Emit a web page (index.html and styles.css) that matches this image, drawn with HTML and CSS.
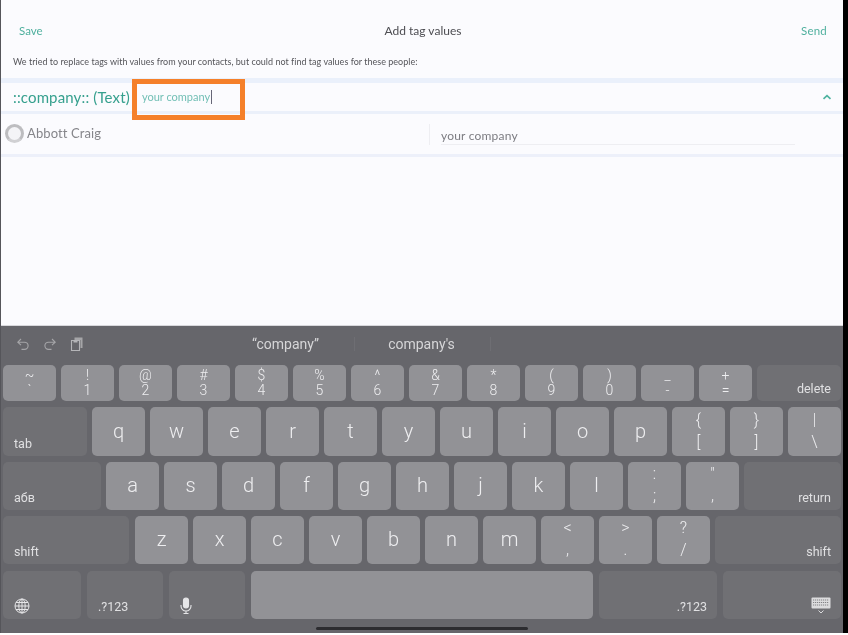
FILE: index.html
```html
<!DOCTYPE html>
<html lang="en">
<head>
<meta charset="utf-8">
<title>Add tag values</title>
<link rel="stylesheet" href="styles.css">
</head>
<body>
<div class="frame">
  <div class="screen">
    <main class="panel">
      <header class="topbar">
        <span class="link">Save</span>
        <span class="title">Add tag values</span>
        <span class="link link-end">Send</span>
      </header>
      <p class="message">We tried to replace tags with values from your contacts, but could not find tag values for these people:</p>
      <section class="tag-row">
        <span class="tag-name">::company:: (Text)</span>
        <span class="tag-input">your company<i class="caret"></i></span>
        <svg class="chevron" width="10" height="6" viewBox="0 0 10 6"><path d="M1.5 4.800 5 1.600l3.500 3.200" fill="none" stroke="#4fb3a0" stroke-width="1.700"/></svg>
        <div class="highlight"></div>
      </section>
      <section class="person-row">
        <span class="avatar"></span>
        <span class="person-name">Abbott Craig</span>
        <span class="person-field"><span class="person-value">your company</span></span>
      </section>
    </main>
    <section class="keyboard">
      <div class="suggest">
        <div class="tools">
          <svg width="14" height="14" viewBox="0 0 14 14"><path d="M5 2 1.800 5.200 5 8.200M2 5.200h6.500a3.600 3.600 0 0 1 0 7.200H5.500" fill="none" stroke="#a5a5a8" stroke-width="1.100"/></svg>
          <svg width="14" height="14" viewBox="0 0 14 14"><path d="M9 2l3.200 3.200L9 8.200M12 5.200H5.500a3.600 3.600 0 0 0 0 7.200h3" fill="none" stroke="#a5a5a8" stroke-width="1.100"/></svg>
          <svg width="14" height="16" viewBox="0 0 14 16"><path d="M4.500 1.500h8v10.500h-2V4H4.500z" fill="#a5a5a8"/><path d="M1.500 4.500h8v10h-8z" fill="#66666b" stroke="#b5b5b8" stroke-width="1.100"/><path d="M3.500 4.500h4v2h-4z" fill="#b5b5b8"/></svg>
        </div>
        <span class="cand">“company”</span>
        <span class="cand">company's</span>
      </div>
      <div class="row row-1">
        <span class="key two small"><b>~</b><b>`</b></span>
        <span class="key two small"><b>!</b><b>1</b></span>
        <span class="key two small"><b>@</b><b>2</b></span>
        <span class="key two small"><b>#</b><b>3</b></span>
        <span class="key two small"><b>$</b><b>4</b></span>
        <span class="key two small"><b>%</b><b>5</b></span>
        <span class="key two small"><b>^</b><b>6</b></span>
        <span class="key two small"><b>&amp;</b><b>7</b></span>
        <span class="key two small"><b>*</b><b>8</b></span>
        <span class="key two small"><b>(</b><b>9</b></span>
        <span class="key two small"><b>)</b><b>0</b></span>
        <span class="key two small"><b>_</b><b>-</b></span>
        <span class="key two small"><b>+</b><b>=</b></span>
        <span class="fn end w-delete">delete</span>
      </div>
      <div class="row row-2">
        <span class="fn w-tab">tab</span>
        <span class="key">q</span><span class="key">w</span><span class="key">e</span><span class="key">r</span><span class="key">t</span><span class="key">y</span><span class="key">u</span><span class="key">i</span><span class="key">o</span><span class="key">p</span>
        <span class="key two"><b>{</b><b>[</b></span>
        <span class="key two"><b>}</b><b>]</b></span>
        <span class="key two"><b>|</b><b>\</b></span>
      </div>
      <div class="row row-3">
        <span class="fn w-abv">абв</span>
        <span class="key">a</span><span class="key">s</span><span class="key">d</span><span class="key">f</span><span class="key">g</span><span class="key">h</span><span class="key">j</span><span class="key">k</span><span class="key">l</span>
        <span class="key two"><b>:</b><b>;</b></span>
        <span class="key two"><b>"</b><b>,</b></span>
        <span class="fn end grow">return</span>
      </div>
      <div class="row row-4">
        <span class="fn w-shift">shift</span>
        <span class="key">z</span><span class="key">x</span><span class="key">c</span><span class="key">v</span><span class="key">b</span><span class="key">n</span><span class="key">m</span>
        <span class="key two"><b>&lt;</b><b>,</b></span>
        <span class="key two"><b>&gt;</b><b>.</b></span>
        <span class="key two"><b>?</b><b>/</b></span>
        <span class="fn end grow">shift</span>
      </div>
      <div class="row row-5">
        <span class="fn w-globe icon-key">
          <svg width="16" height="16" viewBox="0 0 16 16" fill="none" stroke="#e6e6e8" stroke-width="1"><circle cx="8" cy="8" r="7"/><ellipse cx="8" cy="8" rx="3.200" ry="7"/><path d="M8 1v14M1 8h14M2 4.500h12M2 11.500h12"/></svg>
        </span>
        <span class="fn w-num">.?123</span>
        <span class="fn w-num icon-key">
          <svg width="12" height="17" viewBox="0 0 12 17" fill="none" stroke="#e6e6e8" stroke-width="1.100"><rect x="3.500" y="1" width="5" height="10" rx="2.500" fill="#e6e6e8"/><path d="M1 8v1a5 5 0 0 0 10 0V8M6 14v2.500M3.500 16.500h5"/></svg>
        </span>
        <span class="key w-space"></span>
        <span class="fn end w-wide">.?123</span>
        <span class="fn end w-wide icon-key">
          <svg width="20" height="17" viewBox="0 0 20 17"><rect x=".5" y=".5" width="19" height="11" rx="1" fill="#dcdcde"/><path d="M2 3h16M2 5.500h16M2 8h16" stroke="#77777a" stroke-width=".9" stroke-dasharray="1.200 .8"/><path d="M7.500 13.500 10 16l2.500-2.500" fill="none" stroke="#dcdcde"/></svg>
        </span>
      </div>
      <div class="home"></div>
    </section>
  </div>
</div>
</body>
</html>
```

FILE: styles.css
```css
* { box-sizing: border-box; }
html, body { margin: 0; height: 100%; background: #fff; overflow: hidden; }
.frame {
  display: flex;
  width: 848px;
  height: 633px;
  background: #000;
  border-left: 1px solid #55555a;
  padding-right: 5px;
  filter: blur(.4px);
}
.screen { flex: 1; display: flex; flex-direction: column; min-width: 0; }

.panel {
  height: 326px;
  background: #fbfbfe;
  font-family: Lato, "Open Sans", sans-serif;
  border-bottom: 1px solid #d8d8dc;
}
.topbar {
  display: grid;
  grid-template-columns: 1fr auto 1fr;
  align-items: center;
  height: 62px;
  padding: 0 16px 1px 18px;
}
.link { color: #4fb09e; font-size: 11.500px; }
.link-end { text-align: right; letter-spacing: .2px; }
.title { color: #4d4d52; font-size: 12px; }
.message {
  margin: -7px 0 0;
  padding-left: 12px;
  height: 23px;
  line-height: 13px;
  font-size: 9px;
  color: #55555a;
  letter-spacing: .02px;
}
.tag-row {
  position: relative;
  display: flex;
  align-items: center;
  height: 36px;
  padding: 0 11px 0 12px;
  border-top: 5px solid #eaf0fb;
  border-bottom: 3px solid #ebf0fa;
}
.tag-name { color: #36a08e; font-size: 15px; letter-spacing: .15px; margin-top: -1px; }
.tag-input { color: #72bfb5; font-size: 11px; margin-left: 12px; }
.caret { display: inline-block; width: 1px; height: 14px; background: #667; vertical-align: -3px; margin-left: 1px; }
.chevron { margin-left: auto; }
.highlight {
  position: absolute;
  left: 131px;
  top: -4px;
  width: 113px;
  height: 41px;
  border: 5px solid #f5802a;
}
.person-row {
  display: flex;
  align-items: center;
  height: 43px;
  padding: 0 48px 0 4px;
  border-bottom: 3px solid #edf0fa;
}
.avatar {
  width: 19px;
  height: 19px;
  border-radius: 50%;
  border: 3px solid #bdbdc0;
  border-bottom-color: #d0d0d3;
  background: #f4f4f7;
  margin-right: 3px;
  margin-top: -2px;
}
.person-name { color: #85858a; font-size: 13px; letter-spacing: .1px; width: 402px; margin-top: -3px; }
.person-field {
  flex: 1;
  display: flex;
  align-items: flex-end;
  height: 21px;
  margin-top: 1px;
  padding-left: 11px;
  border-left: 1px solid #eeeef2;
}
.person-value {
  flex: 1;
  color: #7c7c82;
  font-size: 12px;
  letter-spacing: .2px;
  line-height: 17px;
  border-bottom: 1px solid #eeeef2;
}

.keyboard {
  flex: 1;
  display: flex;
  flex-direction: column;
  background: #66666b;
  padding: 0 0 0 2px;
  font-family: Roboto, Inter, "Liberation Sans", sans-serif;
  color: #eeeef0;
}
.suggest { display: flex; align-items: center; height: 39px; padding-bottom: 3px; color: #d6d6d8; font-size: 14px; flex: none; }
.tools { display: flex; align-items: center; gap: 13px; width: 216px; padding-left: 13px; }
.cand { width: 136px; text-align: center; height: 14px; line-height: 14px; border-right: 1px solid #6e6e73; padding-right: 2px; }
.row { display: flex; gap: 5px; margin-bottom: 6px; flex: none; }
.row-1 { height: 36px; }
.row-2 { height: 49px; }
.row-3 { height: 48px; }
.row-4 { height: 48px; margin-bottom: 7px; }
.row-5 { height: 48px; margin-bottom: 0; gap: 6px; }
.key {
  flex: none;
  width: 53px;
  display: flex;
  align-items: center;
  justify-content: center;
  padding-bottom: 2px;
  background: #929296;
  border-radius: 5px;
  font-size: 20px;
  font-weight: 300;
}
.key b { font-weight: 300; display: block; line-height: 1; }
.two { flex-direction: column; font-size: 16px; gap: 6px; }
.small { font-size: 14px; gap: 1px; }
.fn {
  flex: none;
  display: flex;
  align-items: flex-end;
  padding: 0 10px 5px 11px;
  background: #707074;
  border-radius: 5px;
  font-size: 12.500px;
  color: #e0e0e2;
}
.end { justify-content: flex-end; }
.grow { flex: 1; }
.w-delete { width: 84px; }
.w-tab { width: 84px; }
.w-abv { width: 98px; }
.w-shift { width: 126px; margin-right: 1px; }
.w-globe { width: 78px; }
.w-num { width: 76px; }
.w-space { width: 342px; }
.w-wide { width: 118px; }
.row-3, .row-4 { padding-right: 2px; }
.home {
  width: 212px;
  height: 3px;
  margin: 8px 0 0 313px;
  background: #2c2c30;
  border-radius: 2px;
}
```
